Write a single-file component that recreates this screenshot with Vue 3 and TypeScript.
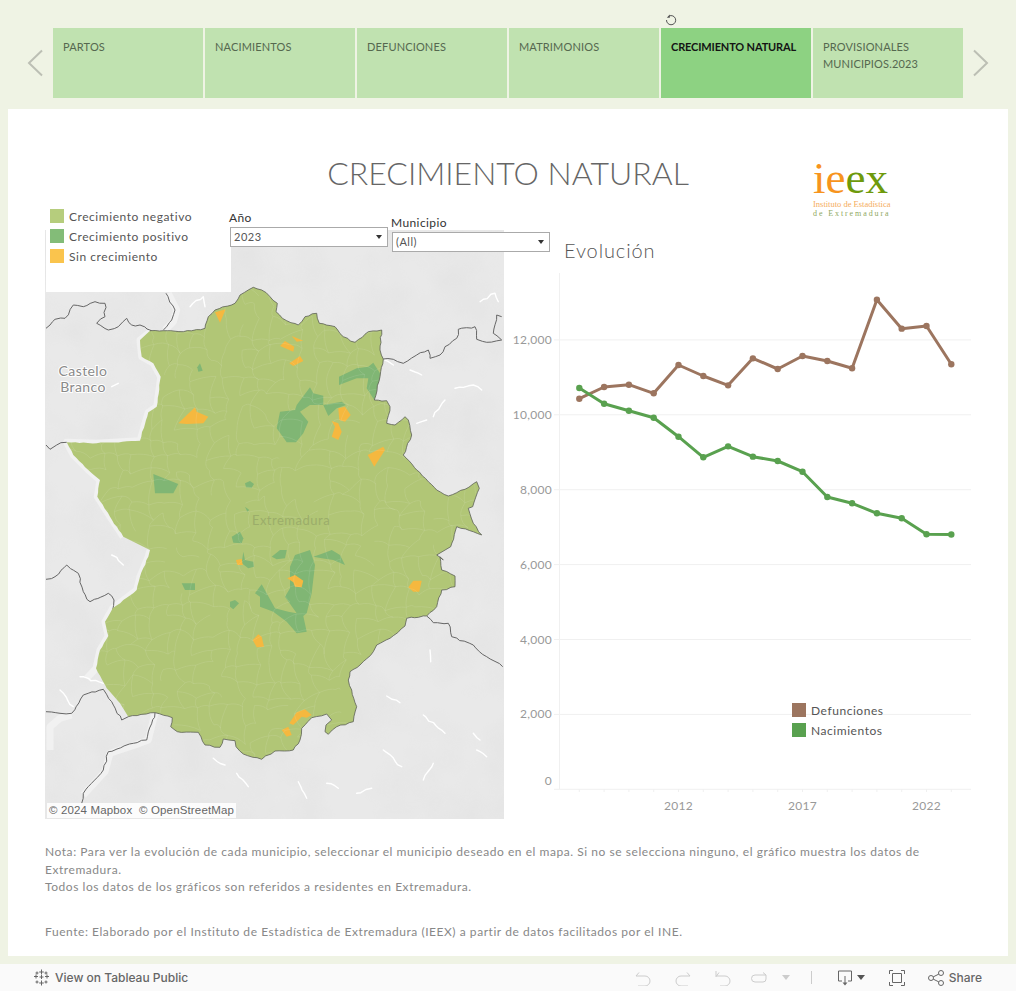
<script setup lang="ts">
// traced from the 3x crops: top sheet starts at page y 280, bottom sheet at page y 550
const mapX = 45
const mapY = 230
const shift = (oy: number) => (s: string) =>
  s
    .trim()
    .split(/\s+/)
    .map((p) => {
      const [x, y] = p.split(',').map(Number)
      return `${(40 + x / 3 - mapX).toFixed(1)},${(oy + y / 3 - mapY).toFixed(1)}`
    })
    .join(' ')
const top = shift(280)
const bot = shift(550)

function rnd(i: number) {
  const v = Math.sin(i * 127.1 + 11.7) * 43758.5453
  return v - Math.floor(v)
}

// break long traced segments up so borders look hand-drawn rather than straight
function rough(points: string, amp: number) {
  const pts = points.split(' ').map((p) => p.split(',').map(Number))
  const out: string[] = []
  pts.forEach(([x, y], i) => {
    out.push(`${x},${y}`)
    const next = pts[i + 1]
    if (!next) return
    const steps = Math.floor(Math.hypot(next[0] - x, next[1] - y) / 4)
    for (let s = 1; s < steps; s++) {
      const t = s / steps
      const jx = (rnd(i * 31 + s * 7 + x) - 0.5) * amp * 2
      const jy = (rnd(i * 17 + s * 11 + y) - 0.5) * amp * 2
      out.push(`${(x + (next[0] - x) * t + jx).toFixed(1)},${(y + (next[1] - y) * t + jy).toFixed(1)}`)
    }
  })
  return out.join(' ')
}

const edgeDark = [
  rough(top('330,152 370,152 430,155 495,145 505,110 525,90 585,70 600,45 640,22 665,30 690,50 712,70 708,95 740,122 775,135 795,110 830,100 838,130 885,140 910,170 945,187 985,155 1025,150 1020,210 1030,237 1020,290 1003,360 1040,362 1050,380 1040,430 1065,435 1095,410 1105,420 1115,465 1090,525 1130,570 1190,630 1225,648 1275,628 1310,605 1318,625 1298,680 1285,685 1300,730 1325,765 1250,740 1232,800'), 0.7),
  rough(bot('1190,15 1210,30 1200,20 1205,60 1245,78 1245,110 1205,120 1190,170 1160,198 1100,205 1095,228 1050,265 1010,285 1000,305 960,345 930,365 925,390 935,420 950,470 940,515 890,530 865,553 855,545 858,525 875,510 860,492 815,503 785,535 780,570 760,600 705,603 665,628 610,612 588,590 585,572 550,567 540,592 495,585 475,547 412,545 392,530 397,503 345,488 265,500'), 0.7),
].join(' ')
const edgeWest = [
  rough(bot('240,460 200,415 168,355 180,300 205,258 195,215 218,175 250,150 290,120 300,80 325,20 330,0'), 0.5),
  rough(top('250,770 210,710 172,650 180,600 145,570 100,525 80,487 170,490 300,482 318,420 325,397 350,380 362,290 340,250 305,230 300,180'), 0.5),
].join(' ')
const outline = `${edgeDark} ${edgeWest}`

const greens = [
  top('897,290 950,265 985,260 1000,248 1020,280 1018,310 1003,360 980,325 985,295 950,295 897,315'),
  top('720,395 765,390 770,375 810,322 820,340 850,347 850,375 810,375 780,395 805,425 790,460 768,487 740,487 710,445'),
  top('850,375 905,365 918,375 890,385 865,408'),
  top('340,582 415,612 400,640 345,640'),
  top('615,610 630,603 642,612 635,623 618,622'),
  top('472,262 480,250 488,272 475,275'),
  top('575,770 600,755 610,775 605,790 580,788'),
  top('615,680 628,690 622,695'),
  bot('610,5 615,30 640,35 642,50 625,55 605,40'),
  bot('765,15 810,0 825,45 815,130 800,190 790,198 800,245 770,250 740,215 700,185 660,170 660,140 645,130 665,103 705,175 745,185 770,190 735,140 750,115 750,50'),
  bot('695,20 720,0 740,0 735,25 710,28'),
  bot('850,10 875,0 900,15 915,45 880,30 845,25 820,20'),
  bot('425,100 465,100 465,120 435,120'),
  bot('570,155 585,150 597,160 580,178 570,170'),
]

const oranges = [
  top('525,97 557,88 540,128'),
  top('755,168 790,182 770,185'),
  top('735,183 763,200 760,215 720,198'),
  top('748,250 780,228 790,243 760,258'),
  top('415,430 465,382 470,395 505,410 490,430 440,432'),
  top('895,385 915,380 932,405 915,425 898,420'),
  top('875,423 895,430 905,455 895,480 875,470 885,440'),
  top('983,525 1030,500 1035,510 1003,560'),
  bot('588,30 605,27 608,45 592,45'),
  bot('742,85 765,75 790,92 785,112 765,110 760,97'),
  bot('1105,112 1120,92 1145,92 1138,125 1120,125'),
  bot('638,270 655,253 665,260 672,290 650,292'),
  bot('748,520 770,487 795,478 815,495 800,503 785,500 760,525'),
  bot('725,540 745,530 755,555 740,560'),
]

const borders = [
  top('18,145 45,118 75,115 100,75 130,80 165,65 195,70 195,110 170,130 205,150 235,140 260,115 275,135 300,135 335,152'),
  top('378,40 405,90 395,120 370,150'),
  top('1030,237 1060,238 1090,250 1130,225 1165,210 1170,235 1200,225 1215,200 1250,175 1255,148 1305,140 1310,178 1340,187 1385,180 1360,160 1370,105 1385,110'),
  top('18,495 30,508 50,495 80,487'),
  bot('18,88 45,80 80,45 115,70 130,125 150,155 205,130 222,150 218,180'),
  bot('18,485 60,490 95,490 130,435 190,418 215,455 245,510 265,500'),
  bot('345,488 320,570 280,580 205,605 190,660 130,730 125,760'),
  bot('1160,198 1180,218 1225,220 1235,260 1300,285 1340,320 1388,350'),
].map((p) => rough(p, 1))

const halos = [
  top('385,40 410,90 400,125 375,150'),
  top('335,152 300,180 305,230 340,250 362,290 350,380 325,397 318,420 300,482 170,490 80,487 100,525 145,570 180,600 172,650 210,710 250,770'),
  bot('330,0 325,20 300,80 290,120 218,175 195,215 205,258 180,300 168,355 140,385'),
  bot('345,488 325,570 285,585 210,610 195,665 130,735'),
  bot('95,495 60,505 30,530 30,600'),
]

const rivers = [
  top('450,80 490,50 495,80'),
  top('1320,65 1365,40 1375,65'),
  top('1035,240 1060,255'),
  top('1110,270 1145,285'),
  top('1245,325 1300,315 1325,330'),
  top('1180,410 1215,360'),
  top('1130,430 1160,420'),
  top('215,320 235,310'),
  top('930,300 945,340 920,385'),
  bot('215,15 250,45'),
  bot('1170,300 1172,335'),
  bot('1040,438 1080,458'),
  bot('1150,495 1215,550'),
  bot('1300,550 1320,570'),
  bot('1310,600 1340,620'),
  bot('520,625 555,645'),
  bot('590,670 625,710'),
  bot('775,695 800,745'),
  bot('860,700 895,715'),
  bot('950,730 995,715'),
  bot('1030,600 1085,650'),
  bot('1150,690 1180,640'),
  bot('120,380 190,400'),
  bot('60,420 100,470'),
].map((p) => rough(p, 1.2))

// thin municipality mesh, clipped to the region
const mesh = (() => {
  const size = 15
  const node = (c: number, r: number, k: number) => rnd(c * 71 + r * 13 + k) * 12 - 6
  let d = ''
  for (let c = 0; c < 32; c++) {
    for (let r = 0; r < 40; r++) {
      const x = c * size + node(c, r, 1)
      const y = r * size + node(c, r, 2)
      if (rnd(c * 3 + r * 17) > 0.3) {
        const nx = (c + 1) * size + node(c + 1, r, 1)
        const ny = r * size + node(c + 1, r, 2)
        d += `M${x.toFixed(1)} ${y.toFixed(1)}Q${((x + nx) / 2 + 2).toFixed(1)} ${((y + ny) / 2 - 3).toFixed(1)} ${nx.toFixed(1)} ${ny.toFixed(1)}`
      }
      if (rnd(c * 19 + r * 5 + 3) > 0.3) {
        const nx = c * size + node(c, r + 1, 1)
        const ny = (r + 1) * size + node(c, r + 1, 2)
        d += `M${x.toFixed(1)} ${y.toFixed(1)}Q${((x + nx) / 2 - 3).toFixed(1)} ${((y + ny) / 2 + 2).toFixed(1)} ${nx.toFixed(1)} ${ny.toFixed(1)}`
      }
    }
  }
  return d
})()

const tabs = ['PARTOS', 'NACIMIENTOS', 'DEFUNCIONES', 'MATRIMONIOS', 'CRECIMIENTO NATURAL', 'PROVISIONALES MUNICIPIOS.2023']

const defunciones = [10430, 10742, 10804, 10574, 11330, 11036, 10787, 11508, 11223, 11570, 11436, 11241, 13073, 12300, 12371, 11348]
const nacimientos = [10715, 10297, 10110, 9923, 9415, 8865, 9158, 8882, 8767, 8481, 7805, 7637, 7370, 7237, 6809, 6805]

// chart svg origin is page (510, 270)
const px = (i: number) => 69.3 + i * 24.8
const py = (v: number) => 519.3 - v * 0.03745
const linePts = (vals: number[]) => vals.map((v, i) => `${px(i).toFixed(1)},${py(v).toFixed(1)}`).join(' ')
const yTicks = [0, 2000, 4000, 6000, 8000, 10000, 12000]
const xTicks = [2012, 2017, 2022]
</script>

<template>
  <div class="page">
    <div class="band">
      <svg class="chev" width="16" height="28" viewBox="0 0 16 28"><path d="M15 1.500 2 14 15 26.500" /></svg>
      <div class="tabs">
        <div v-for="t in tabs" :key="t" class="tab" :class="{ active: t === 'CRECIMIENTO NATURAL' }">
          <svg v-if="t === 'CRECIMIENTO NATURAL'" class="reload" width="12" height="12" viewBox="0 0 12 12">
            <path d="M3.200 2.600A4.600 4.600 0 1 1 1.500 6" />
            <path class="head" d="M4.800 0.600V3.800H1.800Z" />
          </svg>
          {{ t }}
        </div>
      </div>
      <svg class="chev right" width="16" height="28" viewBox="0 0 16 28"><path d="M1 1.500 14 14 1 26.500" /></svg>
    </div>

    <div class="card">
      <header class="head-row">
        <h1>CRECIMIENTO NATURAL</h1>
        <div class="logo">
          <div class="logo-mark"><span class="o">ie</span><span class="g">ex</span></div>
          <div class="logo-l1">Instituto de Estadística</div>
          <div class="logo-l2">de Extremadura</div>
        </div>
      </header>

      <div class="body-row">
        <div class="map">
          <svg width="459" height="589" viewBox="0 0 459 589">
            <defs>
              <filter id="mottle" x="0" y="0" width="100%" height="100%">
                <feTurbulence type="fractalNoise" baseFrequency="0.018" numOctaves="3" seed="4" />
                <feColorMatrix values="0 0 0 0 0.6  0 0 0 0 0.6  0 0 0 0 0.6  0.9 0 0 0 -0.33" />
              </filter>
              <clipPath id="region"><polygon :points="outline" /></clipPath>
            </defs>
            <rect width="459" height="589" fill="#e9e9e9" />
            <rect width="459" height="589" filter="url(#mottle)" opacity="0.35" />
            <polyline v-for="(p, i) in halos" :key="'h' + i" :points="p" class="halo" />
            <polyline v-for="(p, i) in rivers" :key="'r' + i" :points="p" class="river" />
            <polyline v-for="(p, i) in borders" :key="'b' + i" :points="p" class="border" />
            <polygon :points="outline" class="region" />
            <g clip-path="url(#region)">
              <polygon v-for="(p, i) in greens" :key="'g' + i" :points="p" fill="#80b674" />
              <polygon v-for="(p, i) in oranges" :key="'o' + i" :points="p" fill="#f5b83f" />
              <path :d="mesh" class="mesh" />
            </g>
            <polyline :points="edgeDark" class="edge" />
            <text x="38" y="146" text-anchor="middle" class="city">Castelo</text>
            <text x="38" y="162" text-anchor="middle" class="city">Branco</text>
            <text x="246" y="295" text-anchor="middle" class="state">Extremadura</text>
          </svg>
          <div class="attrib">© 2024 Mapbox&nbsp; © OpenStreetMap</div>
        </div>

        <div class="legend">
          <div class="leg-row"><i class="sw neg"></i>Crecimiento negativo</div>
          <div class="leg-row"><i class="sw pos"></i>Crecimiento positivo</div>
          <div class="leg-row"><i class="sw none"></i>Sin crecimiento</div>
        </div>

        <div class="filter year">
          <label>Año</label>
          <div class="select">2023<span class="caret"></span></div>
        </div>
        <div class="filter muni">
          <label>Municipio</label>
          <div class="select">(All)<span class="caret"></span></div>
        </div>

        <div class="chart">
          <h2>Evolución</h2>
          <svg width="480" height="550" viewBox="0 0 480 550">
            <line x1="49.500" y1="3" x2="49.500" y2="519" class="grid" />
            <template v-for="v in yTicks" :key="v">
              <line x1="44" :y1="py(v)" x2="461" :y2="py(v)" class="grid" />
              <text x="42" :y="py(v) + (v === 0 ? -4 : 4)" text-anchor="end" class="tick">{{ v.toLocaleString('en-US') }}</text>
            </template>
            <line v-for="i in 16" :key="i" :x1="px(i - 1)" y1="519" :x2="px(i - 1)" y2="522" class="grid" />
            <text v-for="y in xTicks" :key="y" :x="px(y - 2008)" y="540" text-anchor="middle" class="tick">{{ y }}</text>

            <polyline :points="linePts(defunciones)" class="series brown" />
            <circle v-for="(v, i) in defunciones" :key="'d' + i" :cx="px(i)" :cy="py(v)" r="3.200" fill="#9c755f" />
            <polyline :points="linePts(nacimientos)" class="series green" />
            <circle v-for="(v, i) in nacimientos" :key="'n' + i" :cx="px(i)" :cy="py(v)" r="3.200" fill="#59a14f" />
          </svg>
          <div class="chart-legend">
            <div class="leg-row"><i class="sw def"></i>Defunciones</div>
            <div class="leg-row"><i class="sw nac"></i>Nacimientos</div>
          </div>
        </div>
      </div>

      <div class="notes">
        <p>Nota: Para ver la evolución de cada municipio, seleccionar el municipio deseado en el mapa. Si no se selecciona ninguno, el gráfico muestra los datos de Extremadura.<br />Todos los datos de los gráficos son referidos a residentes en Extremadura.</p>
        <p class="source">Fuente: Elaborado por el Instituto de Estadística de Extremadura (IEEX) a partir de datos facilitados por el INE.</p>
      </div>
    </div>

    <footer class="toolbar">
      <svg class="tb-logo" width="17" height="17" viewBox="0 0 17 17">
        <path d="M8.500 0.500v5M6.200 3h4.600M8.500 11.500v5M6.200 14h4.600M3 5.500v4M1 7.500h4M14 5.500v4M12 7.500h4M8.500 6v4M6.500 8h4M4 2.500v3M2.500 4h3M13 2.500v3M11.500 4h3M4 11.500v3M2.500 13h3M13 11.500v3M11.500 13h3" />
      </svg>
      <span class="tb-text">View on Tableau Public</span>
      <div class="tb-right">
        <svg class="ico off" width="16" height="16" viewBox="0 0 16 16"><path d="M1 6h9a5 5 0 0 1 0 10H3M4 2.500 1 6" /></svg>
        <svg class="ico off m24" width="16" height="16" viewBox="0 0 16 16"><path d="M15 6H6a5 5 0 0 0 0 10h7M12 2.500 15 6" /></svg>
        <svg class="ico off m24" width="16" height="16" viewBox="0 0 16 16"><path d="M1 1v6M1 6h9a5 5 0 0 1 0 10H5M4 2.500 1.500 6" /></svg>
        <svg class="ico off m20" width="16" height="16" viewBox="0 0 16 16"><path d="M15 5H4a3 3 0 0 0 0 7h8a3 3 0 0 0 3-3V5M12 2.500 15 5" /></svg>
        <span class="tb-caret off m15"></span>
        <span class="tb-sep"></span>
        <svg class="ico on m26" width="14" height="16" viewBox="0 0 14 16"><path d="M4 11H.5V1h13v10H10M7 6v8" /><path class="fill" d="M4.500 12.500h5L7 15.500Z" /></svg>
        <span class="tb-caret m5"></span>
        <svg class="ico on m24" width="16" height="16" viewBox="0 0 16 16"><path d="M.5 4V.5H4M12 .5h3.500V4M.5 12v3.500H4M12 15.500h3.500V12M3.500 3.500h9v9h-9Z" /></svg>
        <svg class="ico on m23" width="16" height="16" viewBox="0 0 16 16"><circle cx="3" cy="8" r="2.500" /><circle cx="13" cy="3" r="2.500" /><circle cx="13" cy="13" r="2.500" /><path d="M5.200 6.900 10.800 4.100M5.200 9.100l5.600 2.800" /></svg>
        <span class="tb-text share">Share</span>
      </div>
    </footer>
  </div>
</template>

<style scoped>
.page {
  width: 1016px;
  height: 991px;
  display: flex;
  flex-direction: column;
  background: #eff3e4;
  overflow: hidden;
  font-family: Lato, 'Open Sans', sans-serif;
}

/* tab strip */
.band {
  height: 109px;
  flex-shrink: 0;
  display: flex;
  padding: 28px 0 0 27px;
  box-sizing: border-box;
}
.chev {
  margin: 21px 10px 0 0;
  flex-shrink: 0;
}
.chev.right {
  margin: 21px 0 0 10px;
}
.chev path {
  fill: none;
  stroke: #bcbfb4;
  stroke-width: 2;
}
.tabs {
  display: flex;
  gap: 2px;
}
.tab {
  position: relative;
  width: 150px;
  height: 70px;
  box-sizing: border-box;
  padding: 10px 10px 0;
  background: #c0e2b0;
  color: #55684f;
  font-size: 11px;
  font-weight: 400;
  line-height: 17px;
  letter-spacing: 0.15px;
}
.tab.active {
  background: #8dd282;
  color: #141414;
  font-weight: 700;
  letter-spacing: -0.15px;
}
.reload {
  position: absolute;
  left: 4px;
  top: -14px;
}
.reload path {
  fill: none;
  stroke: #555;
  stroke-width: 1;
}
.reload path.head {
  fill: #555;
  stroke: none;
}

/* white card */
.card {
  flex: 1;
  margin: 0 8px;
  background: #fff;
  display: flex;
  flex-direction: column;
  min-height: 0;
}
.head-row {
  position: relative;
  height: 121px;
  flex-shrink: 0;
  box-sizing: border-box;
  padding-top: 44px;
  text-align: center;
}
h1 {
  margin: 0;
  font-size: 32px;
  font-weight: 300;
  line-height: 40px;
  color: #666;
}
.logo {
  position: absolute;
  left: 805px;
  top: 47px;
  text-align: left;
  font-family: 'Liberation Serif', serif;
}
.logo-mark {
  font-size: 45px;
  line-height: 44px;
}
.logo-mark .o {
  color: #f7941d;
}
.logo-mark .g {
  color: #6e9a0c;
}
.logo-l1 {
  font-size: 8.500px;
  line-height: 9px;
  color: #f5ac5c;
  white-space: nowrap;
}
.logo-l2 {
  font-size: 8px;
  line-height: 9px;
  letter-spacing: 1.9px;
  color: #8fa862;
  white-space: nowrap;
}

.body-row {
  position: relative;
  height: 589px;
  flex-shrink: 0;
  display: flex;
  padding-left: 37px;
}
.map {
  position: relative;
  width: 459px;
  height: 589px;
  flex-shrink: 0;
}
.map svg {
  display: block;
}
.region {
  fill: #b1c676;
}
.edge {
  fill: none;
  stroke: #5c5f55;
  stroke-width: 0.8;
  stroke-linejoin: round;
}
.halo {
  fill: none;
  stroke: #f1f1f1;
  stroke-width: 7;
  stroke-linejoin: round;
}
.river {
  fill: none;
  stroke: #fff;
  stroke-width: 1.400;
  stroke-linejoin: round;
  stroke-linecap: round;
}
.border {
  fill: none;
  stroke: #666;
  stroke-width: 1;
  stroke-linejoin: round;
}
.mesh {
  fill: none;
  stroke: #fff;
  stroke-width: 0.5;
  opacity: 0.2;
}
.city {
  font-size: 14px;
  letter-spacing: 0.4px;
  fill: #8a8a8a;
  paint-order: stroke;
  stroke: #fff;
  stroke-width: 2px;
}
.state {
  font-size: 13px;
  letter-spacing: 0.5px;
  fill: #9bad6a;
}
.attrib {
  position: absolute;
  left: 2px;
  bottom: 1px;
  padding: 0 2px;
  height: 15px;
  line-height: 15px;
  background: rgba(255, 255, 255, 0.85);
  color: #666;
  font-family: 'Liberation Sans', sans-serif;
  font-size: 11.500px;
  letter-spacing: 0.15px;
}

/* floating legend and filters over the map */
.legend {
  position: absolute;
  left: 38px;
  top: -24px;
  width: 185px;
  height: 86px;
  box-sizing: border-box;
  background: #fff;
  padding: 0 0 0 4px;
}
.leg-row {
  display: flex;
  align-items: center;
  height: 20px;
  font-size: 12px;
  letter-spacing: 0.55px;
  color: #555;
}
.sw {
  width: 14px;
  height: 14px;
  margin-right: 5px;
  flex-shrink: 0;
}
.neg {
  background: #b6cd7d;
}
.pos {
  background: #83bc78;
}
.none {
  background: #fac44d;
}
.def {
  background: #9c755f;
}
.nac {
  background: #59a14f;
}
.filter {
  position: absolute;
  width: 158px;
}
.filter.year {
  left: 222px;
  top: -21px;
}
.filter.muni {
  left: 384px;
  top: -16px;
}
.filter label {
  display: block;
  height: 18px;
  margin-left: -1px;
  line-height: 18px;
  font-size: 12px;
  letter-spacing: 0.4px;
  color: #333;
}
.select {
  position: relative;
  height: 20px;
  box-sizing: border-box;
  border: 1px solid #aaa;
  background: #fff;
  padding-left: 3px;
  line-height: 18px;
  font-size: 11px;
  letter-spacing: 0.5px;
  color: #555;
}
.caret {
  position: absolute;
  right: 5px;
  top: 7px;
  border: 3.500px solid transparent;
  border-top: 4px solid #333;
  border-bottom: none;
}

/* line chart */
.chart {
  position: relative;
  flex: 1;
  min-width: 0;
}
.chart svg {
  position: absolute;
  left: 6px;
  top: 40px;
}
h2 {
  margin: 0;
  padding: 8px 0 0 60px;
  font-size: 20px;
  font-weight: 300;
  line-height: 24px;
  letter-spacing: 0.9px;
  color: #555;
}
.grid {
  stroke: #f0f0f0;
  stroke-width: 1;
}
.tick {
  font-size: 12px;
  letter-spacing: 0.3px;
  fill: #999;
}
.series {
  fill: none;
  stroke-width: 3;
  stroke-linejoin: round;
}
.brown {
  stroke: #9c755f;
}
.green {
  stroke: #59a14f;
}
.chart-legend {
  position: absolute;
  left: 288px;
  top: 470px;
}

/* notes */
.notes {
  padding: 24px 60px 0 37px;
  font-size: 12px;
  line-height: 17.500px;
  letter-spacing: 0.55px;
  color: #888;
}
.notes p {
  margin: 0;
}
.notes .source {
  margin-top: 27.500px;
}

/* bottom toolbar */
.toolbar {
  height: 27px;
  margin-top: 8px;
  flex-shrink: 0;
  display: flex;
  align-items: center;
  background: #fafafa;
  padding: 0 34px 0 33px;
}
.tb-logo path {
  fill: none;
  stroke: #666;
  stroke-width: 1;
}
.tb-text {
  margin-left: 5px;
  font-family: Inter, sans-serif;
  font-size: 12px;
  font-weight: 500;
  color: #666;
}
.tb-right {
  margin-left: auto;
  display: flex;
  align-items: center;
}
.ico path,
.ico circle {
  fill: none;
  stroke-width: 1;
}
.ico.off path {
  stroke: #ccc;
}
.ico.on path,
.ico.on circle {
  stroke: #666;
}
.ico.on path.fill {
  fill: #666;
  stroke: none;
}
.tb-caret {
  width: 0;
  height: 0;
  border: 4px solid transparent;
  border-top: 5px solid #555;
  border-bottom: none;
}
.tb-caret.off {
  border-top-color: #ccc;
}
.tb-sep {
  width: 1px;
  height: 13px;
  margin-left: 21px;
  background: #ccc;
}
.m5 {
  margin-left: 5px;
}
.m15 {
  margin-left: 15px;
}
.m20 {
  margin-left: 20px;
}
.m23 {
  margin-left: 23px;
}
.m24 {
  margin-left: 24px;
}
.m26 {
  margin-left: 26px;
}
</style>
